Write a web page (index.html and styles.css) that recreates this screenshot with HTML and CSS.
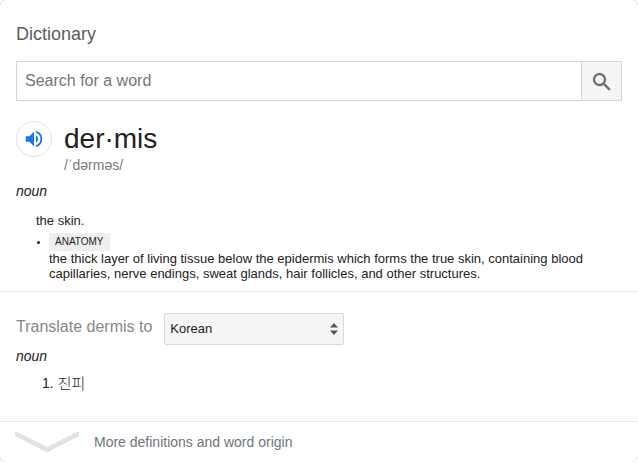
FILE: index.html
```html
<!DOCTYPE html>
<html lang="en">
<head>
<meta charset="utf-8">
<title>Dictionary</title>
<link rel="stylesheet" href="styles.css">
</head>
<body>
<main class="card">
  <section class="entry">
    <h1 class="title">Dictionary</h1>
    <form class="search">
      <input class="search-input" type="text" placeholder="Search for a word" aria-label="Search for a word">
      <button class="search-button" type="button" aria-label="Search">
        <svg width="24" height="24" viewBox="0 0 24 24" fill="#6b6b6b" stroke="#6b6b6b" stroke-width=".3"><path d="M15.5 14h-.79l-.28-.27A6.47 6.47 0 0 0 16 9.5 6.5 6.5 0 1 0 9.5 16c1.61 0 3.09-.59 4.23-1.57l.27.28v.79l5 4.99L20.49 19l-4.99-5zm-6 0a4.5 4.5 0 1 1 0-9 4.5 4.5 0 0 1 0 9z"/></svg>
      </button>
    </form>
    <div class="headword">
      <button class="speaker" type="button" aria-label="Listen">
        <svg width="22" height="22" viewBox="0 0 24 24" fill="#1a73e8"><path d="M3 9v6h4l5 5V4L7 9H3zm13.500 3A4.500 4.500 0 0 0 14 7.970v8.050A4.500 4.500 0 0 0 16.500 12zM14 3.230v2.060a7 7 0 0 1 0 13.420v2.060a9 9 0 0 0 0-17.540z"/></svg>
      </button>
      <div>
        <div class="word">der·mis</div>
        <div class="phonetic">/ˈdərməs/</div>
      </div>
    </div>
    <div class="pos">noun</div>
    <div class="sense">the skin.</div>
    <div class="subsense">
      <span class="bullet"></span>
      <div>
        <span class="tag">ANATOMY</span>
        <div class="definition">the thick layer of living tissue below the epidermis which forms the true skin, containing blood<br>capillaries, nerve endings, sweat glands, hair follicles, and other structures.</div>
      </div>
    </div>
  </section>
  <section class="translate">
    <div class="translate-row">
      <span class="translate-label">Translate dermis to</span>
      <div class="select"><span>Korean</span>
        <svg width="8" height="12" viewBox="0 0 8 12" fill="#555"><path d="M4 0l4 4.500H0zM0 7.500h8L4 12z"/></svg>
      </div>
    </div>
    <div class="pos">noun</div>
    <div class="translation"><span>1.</span><span class="hangul" lang="ko">진피</span></div>
  </section>
  <footer class="more">
    <svg width="64" height="22" viewBox="0 0 64 22" fill="#e2e2e2"><path d="M0 0l32 16L64 0v5L32 21.500 0 5z"/></svg>
    <span>More definitions and word origin</span>
  </footer>
</main>
</body>
</html>
```
FILE: styles.css
```css
* { box-sizing: border-box; }
body {
  margin: 0;
  background: #fff;
  font-family: "Liberation Sans", Arial, "Noto Sans CJK KR", sans-serif;
  color: #222;
  overflow: hidden;
}
.card {
  width: 640px;
  height: 464px;
  margin: -1px;
  border: 1px solid #dfe1e5;
  border-radius: 8px;
  display: flex;
  flex-direction: column;
}
.entry {
  height: 292px;
  padding: 23px 16px 0;
  border-bottom: 1px solid #e8e8e8;
}
.title {
  margin: 0;
  font-size: 18px;
  font-weight: 400;
  line-height: 22px;
  color: #5c5c5c;
}
.search {
  display: flex;
  height: 40px;
  margin-top: 16px;
  border: 1px solid #d6d6d6;
}
.search-input {
  flex: 1;
  min-width: 0;
  padding: 0 8px;
  border: 0;
  background: #fff;
  font: 16px "Liberation Sans", Arial, sans-serif;
}
.search-input::placeholder { color: #757575; }
.search-button {
  display: flex;
  align-items: center;
  justify-content: center;
  width: 40px;
  padding: 2px 0 0;
  border: 0;
  border-left: 1px solid #d6d6d6;
  background: #f5f5f5;
}
.headword {
  display: flex;
  gap: 12px;
  height: 72px;
  padding-top: 20px;
}
.speaker {
  display: flex;
  align-items: center;
  justify-content: center;
  width: 36px;
  height: 36px;
  padding: 0;
  border: 1px solid #dfe1ec;
  border-radius: 50%;
  background: #fff;
}
.word {
  padding-top: 1px;
  font-size: 28px;
  line-height: 34px;
}
.phonetic {
  font-size: 14px;
  line-height: 18px;
  color: #77797c;
}
.pos {
  font-size: 14px;
  font-style: italic;
  line-height: 18px;
  margin-top: 9px;
}
.sense {
  margin: 13px 0 0 20px;
  font-size: 13px;
  line-height: 15px;
}
.subsense {
  display: flex;
  gap: 9px;
  margin: 5px 0 0 21px;
}
.bullet {
  width: 3px;
  height: 3px;
  margin-top: 8px;
  border-radius: 50%;
  background: #222;
}
.tag {
  display: block;
  width: 61px;
  height: 18px;
  padding-left: 6px;
  border-radius: 2px;
  background: #eee;
  font-size: 10px;
  line-height: 17px;
}
.definition {
  font-size: 13px;
  line-height: 15px;
  white-space: nowrap;
}
.translate {
  height: 130px;
  padding: 21px 16px 0;
  border-bottom: 1px solid #e8e8e8;
}
.translate-row {
  display: flex;
  gap: 12px;
}
.translate-label {
  font-size: 16px;
  line-height: 28px;
  color: #878787;
}
.select {
  display: flex;
  align-items: center;
  justify-content: space-between;
  width: 180px;
  height: 32px;
  padding: 0 5px;
  border: 1px solid #d9d9d9;
  border-radius: 2px;
  background: #f5f5f5;
  font-size: 13px;
}
.select span { padding-bottom: 2px; }
.translate .pos { margin-top: 2px; }
.translation {
  display: flex;
  gap: 4px;
  margin: 9px 0 0 26px;
  font-size: 14px;
  line-height: 18px;
}
.hangul {
  font-family: "Noto Sans CJK KR", sans-serif;
  font-size: 15px;
  font-weight: 300;
}
.more {
  display: flex;
  align-items: center;
  gap: 15px;
  height: 40px;
  padding-left: 15px;
  font-size: 14px;
  color: #70757a;
}
```
